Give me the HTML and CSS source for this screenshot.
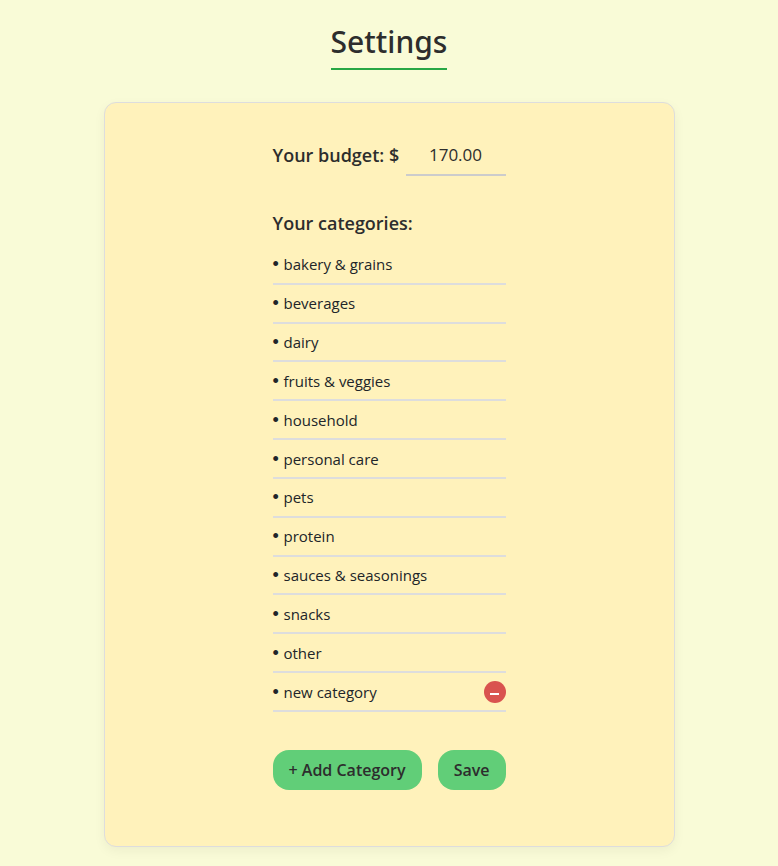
FILE: index.html
```html
<!DOCTYPE html>
<html lang="en">
<head>
<meta charset="utf-8">
<meta name="viewport" content="width=device-width, initial-scale=1">
<title>Settings</title>
<link rel="stylesheet" href="styles.css">
</head>
<body>
<main class="page">
  <h1 class="title">Settings</h1>
  <form class="card">
    <div class="content">
      <div class="budget">
        <label class="label" for="budget">Your budget: $</label>
        <input class="budget-input" id="budget" type="text" inputmode="decimal" value="170.00">
      </div>
      <h2 class="label">Your categories:</h2>
      <ul class="categories">
        <li class="category">bakery &amp; grains</li>
        <li class="category">beverages</li>
        <li class="category">dairy</li>
        <li class="category">fruits &amp; veggies</li>
        <li class="category">household</li>
        <li class="category">personal care</li>
        <li class="category">pets</li>
        <li class="category">protein</li>
        <li class="category">sauces &amp; seasonings</li>
        <li class="category">snacks</li>
        <li class="category">other</li>
        <li class="category">new category
          <button class="remove" type="button" aria-label="Remove new category"><svg width="22" height="22" viewBox="0 0 22 22" aria-hidden="true"><path d="M6 12h9v2H6z" fill="#fff"/></svg></button>
        </li>
      </ul>
      <div class="actions">
        <button class="button" type="button">+ Add Category</button>
        <button class="button" type="submit">Save</button>
      </div>
    </div>
  </form>
</main>
</body>
</html>
```
FILE: styles.css
```css
* {
  box-sizing: border-box;
}

body {
  margin: 0;
  background: #f9fbd7;
  color: #2d2d2d;
  font-family: "Segoe UI", "Open Sans", "Noto Sans", sans-serif;
  font-size: 15px;
}

.page {
  display: flex;
  flex-direction: column;
  align-items: center;
  gap: 32px;
  padding: 16px 16px 19px;
}

.title {
  margin: 0;
  border-bottom: 2px solid #28a745;
  font-family: "Segoe UI", "Noto Sans", sans-serif;
  font-size: 30px;
  font-weight: 500;
  line-height: 52px;
}

.card {
  display: flex;
  justify-content: center;
  width: 100%;
  max-width: 571px;
  padding: 32px 24px 56px;
  border: 1px solid #dddddd;
  border-radius: 12px;
  background: #fff2bb;
  box-shadow: 0 4px 12px rgba(0, 0, 0, 0.05);
}

.content {
  width: 100%;
  max-width: 233px;
}

.budget {
  display: flex;
  align-items: flex-start;
  justify-content: space-between;
  margin-bottom: 30px;
}

.label {
  margin: 0;
  font-size: 18px;
  font-weight: 600;
  line-height: 34px;
  white-space: nowrap;
}

.budget .label {
  line-height: 40px;
}

.budget-input {
  width: 100px;
  height: 41px;
  padding: 0;
  border: 0;
  border-bottom: 2px solid #cccccc;
  background: transparent;
  color: inherit;
  font: inherit;
  font-size: 17px;
  text-align: center;
}

.categories {
  display: grid;
  grid-auto-rows: 1fr;
  min-height: 466px;
  margin: 6px 0 38px;
  padding: 0;
  list-style: none;
}

.category {
  display: flex;
  align-items: center;
  border-bottom: 2px solid #dddddd;
  color: #212529;
}

.category::before {
  content: "•";
  width: 11px;
  font-family: "Segoe UI", "Liberation Sans", sans-serif;
  font-size: 18px;
  line-height: 20px;
}

.remove {
  display: flex;
  width: 22px;
  height: 22px;
  margin-left: auto;
  padding: 0;
  border: 0;
  border-radius: 50%;
  background: #d9534f;
  cursor: pointer;
}

.actions {
  display: flex;
  justify-content: space-between;
}

.button {
  height: 40px;
  padding: 0 16px;
  border: 0;
  border-radius: 16px;
  background: #61ce78;
  color: inherit;
  font: inherit;
  font-size: 16px;
  font-weight: 600;
  white-space: nowrap;
  cursor: pointer;
}
```
